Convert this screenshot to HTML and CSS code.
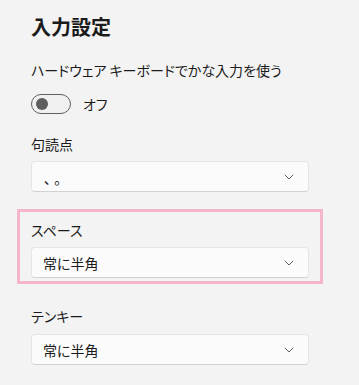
FILE: index.html
```html
<!DOCTYPE html>
<html lang="ja">
<head>
<meta charset="utf-8">
<link rel="stylesheet" href="styles.css">
</head>
<body>
<main class="page">
  <h1 class="title">入力設定</h1>
  <p class="subtitle">ハードウェア キーボードでかな入力を使う</p>
  <div class="toggle-row">
    <span class="toggle"><span class="knob"></span></span>
    <span class="toggle-label">オフ</span>
  </div>

  <div class="field">
    <div class="label">句読点</div>
    <div class="select"><span class="value punct">、。</span><svg class="chev" width="10" height="6" viewBox="0 0 10 6"><path d="M0.8 0.8 L5 5 L9.2 0.8" fill="none" stroke="#5f5f5f" stroke-width="1"/></svg></div>
  </div>

  <div class="field highlight">
    <div class="label">スペース</div>
    <div class="select"><span class="value">常に半角</span><svg class="chev" width="10" height="6" viewBox="0 0 10 6"><path d="M0.8 0.8 L5 5 L9.2 0.8" fill="none" stroke="#5f5f5f" stroke-width="1"/></svg></div>
  </div>

  <div class="field last">
    <div class="label">テンキー</div>
    <div class="select"><span class="value">常に半角</span><svg class="chev" width="10" height="6" viewBox="0 0 10 6"><path d="M0.8 0.8 L5 5 L9.2 0.8" fill="none" stroke="#5f5f5f" stroke-width="1"/></svg></div>
  </div>
</main>
</body>
</html>
```
FILE: styles.css
```css
html, body {
  margin: 0;
  padding: 0;
  background: #f3f3f3;
}
body {
  font-family: "Noto Sans CJK JP", "Noto Sans", sans-serif;
  font-feature-settings: "palt";
  color: #1b1b1b;
  width: 359px;
  height: 385px;
  overflow: hidden;
}
.page {
  padding: 13px 50px 0 31px;
  display: flex;
  flex-direction: column;
}
.title {
  margin: 0;
  font-size: 20px;
  line-height: 28px;
  font-weight: 700;
}
.subtitle {
  margin: 19px 0 0;
  font-size: 14px;
  line-height: 20px;
}
.toggle-row {
  margin-top: 14px;
  display: flex;
  align-items: center;
  gap: 12px;
  height: 20px;
}
.toggle {
  box-sizing: border-box;
  width: 40px;
  height: 20px;
  border: 1px solid #616161;
  border-radius: 10px;
  background: #f0f0f0;
  display: flex;
  align-items: center;
  padding-left: 4px;
}
.knob {
  width: 12px;
  height: 12px;
  border-radius: 50%;
  background: #5d5d5d;
}
.toggle-label {
  font-size: 14px;
  line-height: 20px;
}
.field {
  margin-top: 20px;
  display: flex;
  flex-direction: column;
  gap: 7px;
}
.label {
  font-size: 14px;
  line-height: 20px;
}
.select {
  box-sizing: border-box;
  height: 31px;
  background: #fbfbfb;
  border: 1px solid #e5e5e5;
  border-bottom-color: #d2d2d2;
  border-radius: 4px;
  display: flex;
  align-items: center;
  justify-content: space-between;
  padding: 0 14px 0 11px;
}
.value {
  font-size: 14px;
  line-height: 20px;
}
.punct {
  position: relative;
  top: 1px;
  letter-spacing: 3px;
  padding-left: 1px;
}
.chev {
  display: block;
}
.highlight {
  margin: 17px -14px 0;
  border: 3px solid #f5b6cd;
  padding: 8px 11px 3px;
}
.last {
  margin-top: 22px;
  gap: 8px;
}
```
